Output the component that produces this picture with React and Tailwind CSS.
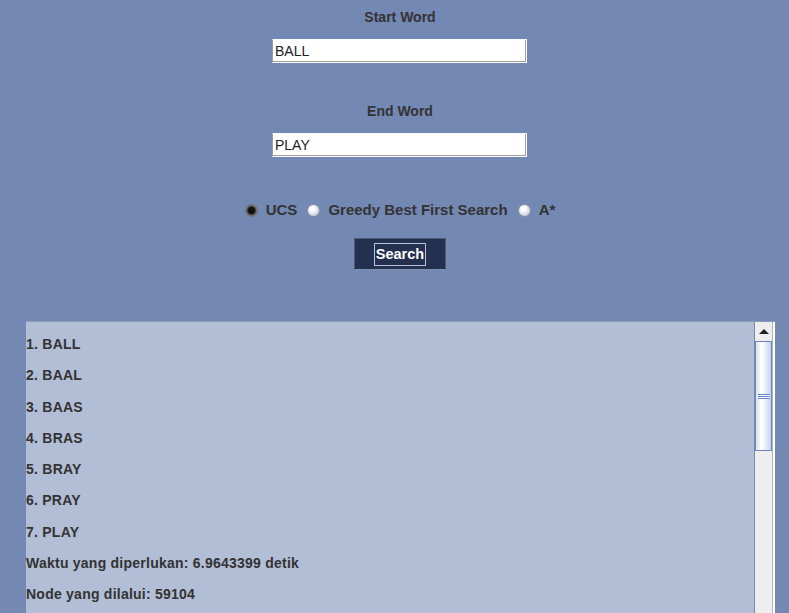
import { useState } from 'react';

const Field = ({ value }) => (
  <div className="w-[255px] h-[24px] bg-white border border-white border-l-[#9c9c9c] shadow-[inset_-1px_-1px_0_#a0a0a0] flex items-center pl-[2px] text-[14px] text-[#222] leading-none">
    {value}
  </div>
);

const Radio = ({ checked, label }) => (
  <div className="flex items-center">
    {checked ? (
      <span className="w-[13px] h-[13px] rounded-full bg-[radial-gradient(circle_at_50%_50%,#111_0,#111_3px,#3a3a3a_4px,#9a9a9a_6px)] border border-[#6f6f6f]" />
    ) : (
      <span className="w-[13px] h-[13px] rounded-full bg-[radial-gradient(circle_at_40%_35%,#ffffff_0,#f4f6fa_3px,#c7cedc_7px)] border border-[#8b93a5]" />
    )}
    <span className="ml-[8px] text-[15px] font-bold text-[#333]">{label}</span>
  </div>
);

const results = [
  '1. BALL',
  '2. BAAL',
  '3. BAAS',
  '4. BRAS',
  '5. BRAY',
  '6. PRAY',
  '7. PLAY',
  'Waktu yang diperlukan: 6.9643399 detik',
  'Node yang dilalui: 59104',
];

export default function App() {
  const [start] = useState('BALL');
  const [end] = useState('PLAY');

  return (
    <div className="w-[789px] h-[613px] overflow-hidden bg-[#7488b4]" style={{ fontFamily: '"Liberation Sans", Arial, sans-serif' }}>
      <div className="w-[800px] flex flex-col items-center">
        <div className="mt-[9px] h-[16px] leading-[16px] text-[14px] font-bold text-[#333]">Start Word</div>
        <div className="mt-[14px] self-start ml-[272px]">
          <Field value={start} />
        </div>

        <div className="mt-[40px] h-[16px] leading-[16px] text-[14px] font-bold text-[#333]">End Word</div>
        <div className="mt-[14px] self-start ml-[272px]">
          <Field value={end} />
        </div>

        <div className="mt-[44px] h-[18px] flex items-center gap-[10px]">
          <Radio checked label="UCS" />
          <Radio label="Greedy Best First Search" />
          <Radio label="A*" />
        </div>

        <div className="mt-[19px] w-[92px] h-[32px] bg-[#24304f] border border-[#4d5873] border-b-[#8290ad] flex items-center justify-center">
          <span className="px-[1px] h-[23px] leading-[21px] border border-[#b9c2d6] text-white text-[14.5px] font-bold">Search</span>
        </div>

        <div className="mt-[51px] self-stretch ml-[26px] mr-[25px] h-[300px] flex border-t border-[#8b9ab8]">
          <div className="flex-1 bg-[#b2bdd6] pt-[7px] text-[14px] font-bold text-[#333] tracking-[0.24px]">
            {results.map((line) => (
              <div key={line} className="h-[31.25px] leading-[31.25px]">{line}</div>
            ))}
          </div>
          <div className="w-[21px] flex border-l border-[#7b8ca8]">
            <div className="w-[17px] flex flex-col bg-[#eeeeee]">
              <div className="h-[19px] flex items-center justify-center">
                <svg width="10" height="5" viewBox="0 0 10 5">
                  <path d="M0 5 L5 0 L10 5 Z" fill="#222" />
                </svg>
              </div>
              <div className="h-[110px] border border-[#6886c2] bg-[linear-gradient(90deg,#d6e0f0_0%,#ffffff_35%,#f2f5fb_55%,#c4d2ea_100%)] flex flex-col items-center justify-center">
                <span className="w-[12px] h-[1px] bg-[#6886c2]" />
                <span className="w-[12px] h-[1px] bg-white" />
                <span className="w-[12px] h-[1px] bg-[#6886c2]" />
                <span className="w-[12px] h-[1px] bg-white" />
                <span className="w-[12px] h-[1px] bg-[#6886c2]" />
              </div>
            </div>
            <div className="w-[1px] bg-[#b4b4b4]" />
            <div className="w-[2px] bg-white" />
          </div>
        </div>
      </div>
    </div>
  );
}
